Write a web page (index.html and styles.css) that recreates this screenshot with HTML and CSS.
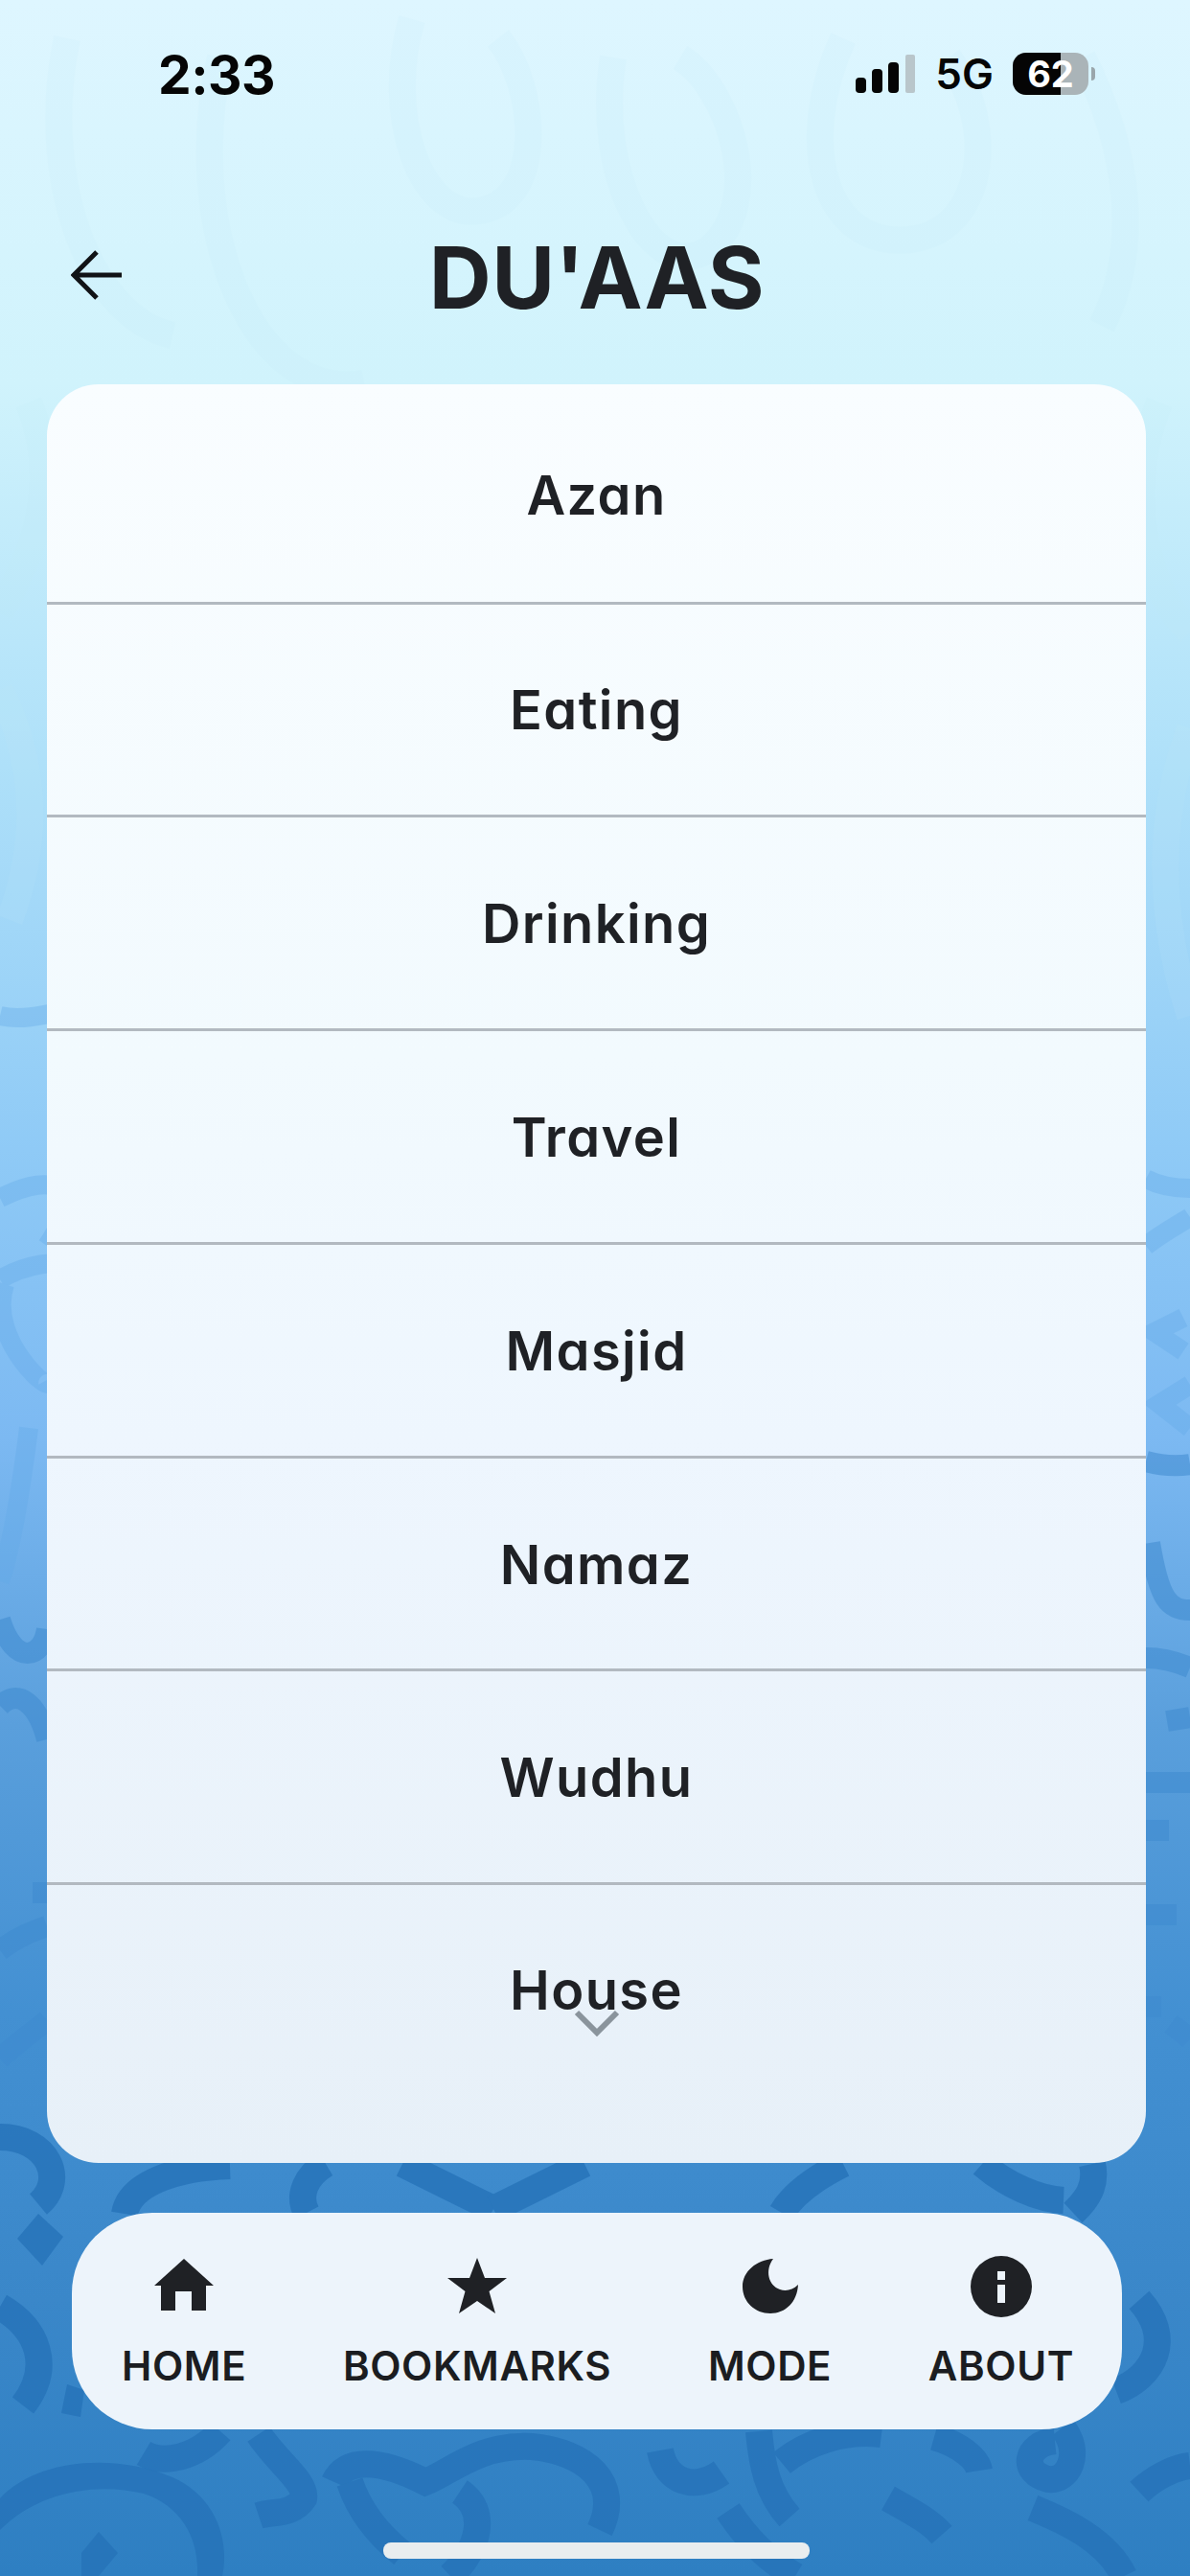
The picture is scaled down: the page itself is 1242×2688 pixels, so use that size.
FILE: index.html
```html
<!DOCTYPE html>
<html lang="en">
<head>
<meta charset="utf-8">
<title>Du'aas</title>
<link rel="stylesheet" href="styles.css">
</head>
<body>
<div class="phone">
  <svg class="pattern" viewBox="0 0 1242 2688" aria-hidden="true">
    <g class="stroke-soft">
      <path d="M70 40C40 180 90 330 180 350"/>
      <path d="M230 60C190 230 260 420 380 400"/>
      <path d="M430 20C400 120 440 230 500 220C570 210 560 90 520 40"/>
      <path d="M640 60C620 180 680 300 740 260C800 210 760 90 710 60"/>
      <path d="M880 40C830 150 860 260 950 250C1030 240 1040 130 990 60"/>
      <path d="M1130 60C1180 160 1190 260 1150 340"/>
      <path d="M30 420C70 520 20 600 0 640"/>
      <path d="M1210 420C1170 520 1200 620 1242 660"/>
      <path d="M0 720C40 800 40 880 10 960"/>
      <path d="M1242 760C1205 860 1210 960 1242 1060"/>
    </g>
    <g class="stroke-mid">
      <path d="M0 1060C40 1070 90 1040 130 1050"/>
      <path d="M0 1250C60 1220 90 1240 49 1300"/>
      <path d="M0 1335C60 1300 120 1330 49 1330"/>
      <path d="M5 1340C-15 1400 60 1460 49 1440"/>
      <path d="M30 1490C20 1570 10 1620 0 1650"/>
      <path d="M1196 1230C1215 1240 1235 1240 1242 1240"/>
      <path d="M1196 1300C1215 1285 1235 1275 1242 1270"/>
      <path d="M1235 1375L1205 1390L1235 1410"/>
      <path d="M1242 1445L1210 1465L1242 1490"/>
    </g>
    <g class="stroke-strong">
      <path d="M0 1690C15 1740 45 1730 49 1700"/>
      <path d="M0 1780C20 1760 40 1780 49 1815"/>
      <path d="M1196 1525C1215 1530 1230 1530 1242 1528"/>
      <path d="M1200 1610C1210 1670 1220 1680 1242 1680"/>
      <path d="M1196 1730C1215 1730 1230 1735 1242 1740"/>
      <path d="M1218 1796L1242 1792"/>
      <path d="M1196 1860H1242"/>
      <path d="M1196 1910H1220"/>
      <path d="M1196 1998H1228"/>
      <path d="M0 2035C20 2020 35 2015 49 2010"/>
      <path d="M0 2148C20 2130 35 2120 49 2108"/>
      <path d="M1196 2094L1212 2094"/>
      <path d="M1222 2112C1230 2118 1236 2122 1242 2128"/>
      <path d="M34 1975H49"/>
    </g>
    <g class="stroke-deep">
      <path d="M0 2230C50 2230 70 2275 40 2300"/>
      <path d="M130 2310C135 2280 180 2262 240 2260"/>
      <path d="M320 2309C310 2290 320 2270 340 2258"/>
      <path d="M420 2258L515 2305"/>
      <path d="M610 2258L515 2305"/>
      <path d="M816 2309C830 2285 860 2268 880 2258"/>
      <path d="M1025 2258C1050 2280 1085 2295 1110 2296"/>
      <path d="M1140 2258C1145 2280 1135 2295 1120 2309"/>
      <path d="M0 2407C40 2430 55 2470 24 2510"/>
      <path d="M1189 2400C1225 2440 1205 2480 1165 2495"/>
      <path d="M150 2560C170 2572 205 2565 230 2537"/>
      <path d="M270 2540C290 2570 320 2590 317 2607C305 2625 285 2620 270 2625"/>
      <path d="M349 2590C360 2565 395 2565 444 2590C470 2580 500 2550 555 2553C610 2558 650 2590 626 2640"/>
      <path d="M365 2590C375 2620 395 2645 420 2665"/>
      <path d="M689 2557C695 2590 725 2600 753 2580"/>
      <path d="M792 2537C795 2570 800 2600 824 2627"/>
      <path d="M920 2540C880 2535 840 2550 816 2570"/>
      <path d="M975 2543C1000 2550 1020 2565 1022 2578"/>
      <path d="M1109 2533C1130 2560 1115 2590 1094 2587C1065 2580 1070 2550 1101 2547"/>
      <path d="M927 2607C950 2620 970 2630 983 2645"/>
      <path d="M1078 2617C1110 2630 1155 2650 1173 2688"/>
      <path d="M1189 2600C1205 2585 1225 2575 1242 2573"/>
      <path d="M480 2600C510 2620 500 2660 470 2688"/>
      <path d="M760 2620C780 2650 800 2670 830 2688"/>
    </g>
    <g class="fill-deep">
      <path d="M0 2607C40 2565 120 2560 180 2585C225 2605 240 2650 232 2688H206C208 2650 190 2615 150 2602C100 2590 40 2600 0 2640Z"/>
      <path d="M40 2310l26 24-22 30-26-28z"/>
      <path d="M103 2642l20 22-20 24h-18v-24z"/>
      <path d="M70 2488l18 6-4 28-20-4z"/>
    </g>
  </svg>

  <header class="status">
    <span class="time">2:33</span>
    <div class="status-right">
      <svg class="signal" viewBox="0 0 62 40" aria-hidden="true">
        <rect class="bar" x="0" y="24" width="11" height="16" rx="4"/>
        <rect class="bar" x="17" y="15" width="11" height="25" rx="4"/>
        <rect class="bar" x="34" y="8" width="11" height="32" rx="4"/>
        <rect class="bar-off" x="52" y="0" width="10" height="40" rx="2"/>
      </svg>
      <span class="net">5G</span>
      <div class="battery"><span class="battery-fill"></span><span class="battery-num">62</span></div>
      <span class="battery-cap"></span>
    </div>
  </header>

  <div class="titlebar">
    <svg class="back" viewBox="0 0 54 52" aria-hidden="true">
      <path d="M27 2L3 26L27 50M3 26H53"/>
    </svg>
    <h1 class="title">DU'AAS</h1>
  </div>

  <main class="list">
    <div class="row row-first">Azan</div>
    <div class="row">Eating</div>
    <div class="row">Drinking</div>
    <div class="row">Travel</div>
    <div class="row">Masjid</div>
    <div class="row">Namaz</div>
    <div class="row">Wudhu</div>
    <div class="row row-last">House
      <svg class="chevron" viewBox="0 0 48 28" aria-hidden="true"><path d="M3 3L24 24L45 3"/></svg>
    </div>
  </main>

  <nav class="tabs">
    <div class="tab">
      <svg class="tab-icon" viewBox="0 0 64 64" aria-hidden="true"><path d="M32 3L1 31H8V57H23V37H40V57H55V31H63Z"/></svg>
      <span>HOME</span>
    </div>
    <div class="tab">
      <svg class="tab-icon" viewBox="0 0 64 64" aria-hidden="true"><path d="M32 2L40 23H63L44.500 37L51 60L32 47L13 60L19.500 37L1 23H24Z"/></svg>
      <span>BOOKMARKS</span>
    </div>
    <div class="tab">
      <svg class="tab-icon" viewBox="0 0 64 64" aria-hidden="true"><path d="M35 3C18 4 3 16 3 32C3 48 16 60 32 60C48 60 60 48 61 30C55 36 48 37 42 35C30 31 26 15 35 3Z"/></svg>
      <span>MODE</span>
    </div>
    <div class="tab">
      <svg class="tab-icon" viewBox="0 0 64 64" aria-hidden="true"><path fill-rule="evenodd" d="M32 0a32 32 0 1 1 0 64a32 32 0 1 1 0-64ZM28 16v9h8v-9ZM28 30v19h8V30Z"/></svg>
      <span>ABOUT</span>
    </div>
  </nav>

  <div class="home-indicator"></div>
</div>
</body>
</html>
```
FILE: styles.css
```css
* { box-sizing: border-box; margin: 0; padding: 0; }
html, body { width: 1242px; height: 2688px; overflow: hidden; }
body { font-family: "Inter", "Liberation Sans", sans-serif; color: #1f2125; font-feature-settings: "cv11" 1; }

.phone {
  position: relative;
  width: 1242px;
  height: 2688px;
  display: flex;
  flex-direction: column;
  overflow: hidden;
  background: linear-gradient(180deg, #def6ff 0, #d0f3fc 400px, #aee0f9 800px, #8fcaf6 1200px, #7cb9f2 1500px, #5a9fdc 1800px, #4390d2 2100px, #3a87c9 2400px, #2e7fc2 2688px);
}
.pattern { position: absolute; inset: 0; width: 1242px; height: 2688px; fill: none; }
.stroke-soft { stroke: #c2ebf8; stroke-width: 28; opacity: .13; }
.stroke-mid { stroke: #62a9e8; stroke-width: 20; opacity: .35; }
.stroke-strong { stroke: #3f8bd0; stroke-width: 22; opacity: .55; }
.stroke-deep { stroke: #2673b9; stroke-width: 28; opacity: .8; }
.fill-deep { fill: #2673b9; opacity: .8; }

.status {
  position: relative;
  height: 116px;
  padding: 47px 99px 0 165px;
  display: flex;
  justify-content: space-between;
  align-items: flex-start;
  color: #050505;
}
.time { font-size: 55px; line-height: 62px; font-weight: 700; letter-spacing: -.5px; font-feature-settings: normal; }
.status-right { display: flex; align-items: center; height: 44px; margin-top: 8px; }
.signal { width: 62px; height: 40px; }
.bar { fill: #050505; }
.bar-off { fill: #b9c6cb; }
.net { margin-left: 21px; font-size: 44px; font-weight: 600; line-height: 44px; letter-spacing: 0; }
.battery {
  position: relative;
  width: 79px;
  height: 44px;
  margin-left: 20px;
  border-radius: 14px;
  background: #aab4b8;
  overflow: hidden;
}
.battery-fill { position: absolute; left: 0; top: 0; bottom: 0; width: 50px; background: #050505; }
.battery-num {
  position: absolute;
  inset: 0;
  text-align: center;
  font-size: 38px;
  font-weight: 700;
  line-height: 44px;
  color: #fff;
}
.battery-cap { width: 4px; height: 14px; margin-left: 3px; background: #9aa6ab; border-radius: 0 4px 4px 0; }

.titlebar {
  position: relative;
  height: 285px;
  padding: 129px 70px 0 74px;
  display: grid;
  grid-template-columns: 1fr auto 1fr;
  align-items: start;
}
.back {
  width: 54px;
  height: 52px;
  margin-top: 16px;
  fill: none;
  stroke: #111316;
  stroke-width: 5;
}
.title { grid-column: 2; font-size: 90px; font-weight: 700; line-height: 90px; color: #1f2125; letter-spacing: .5px; font-feature-settings: normal; }

.list {
  position: relative;
  margin: 0 46px 0 49px;
  height: 1856px;
  border-radius: 54px;
  overflow: hidden;
  display: flex;
  flex-direction: column;
  background: linear-gradient(180deg, #f9fdff 0, #f2fafe 700px, #eef6fe 1100px, #e7f0f8 1856px);
}
.row {
  flex: 0 0 222.800px;
  display: flex;
  align-items: center;
  justify-content: center;
  padding-top: 2px;
  font-size: 56px;
  font-weight: 600;
  letter-spacing: 1.400px;
  color: #1f2125;
  border-bottom: 3px solid #b2b9c0;
}
.row-first { flex-basis: 229.500px; padding-top: 6px; }
.row-last { position: relative; flex: 1 1 auto; border-bottom: 0; align-items: flex-start; padding-top: 76px; }
.chevron {
  position: absolute;
  left: 550px;
  top: 130px;
  width: 48px;
  height: 28px;
  fill: none;
  stroke: #8a949c;
  stroke-width: 6;
}

.tabs {
  position: relative;
  margin: 52px 71px 0 75px;
  height: 226px;
  border-radius: 84px;
  background: #edf4fb;
  display: flex;
  justify-content: space-between;
  padding: 0 50px 0 52px;
}
.tab {
  display: flex;
  flex-direction: column;
  align-items: center;
  padding-top: 45px;
  font-size: 42px;
  font-weight: 600;
  letter-spacing: .6px;
  line-height: 50px;
  color: #1b1d21;
  font-feature-settings: normal;
}
.tab-icon { width: 64px; height: 64px; fill: #1f2125; margin-bottom: 26px; }
.home-indicator {
  position: relative;
  align-self: flex-start;
  margin: 118px 0 0 400px;
  width: 445px;
  height: 17px;
  border-radius: 8px;
  background: #e9edef;
}
```
